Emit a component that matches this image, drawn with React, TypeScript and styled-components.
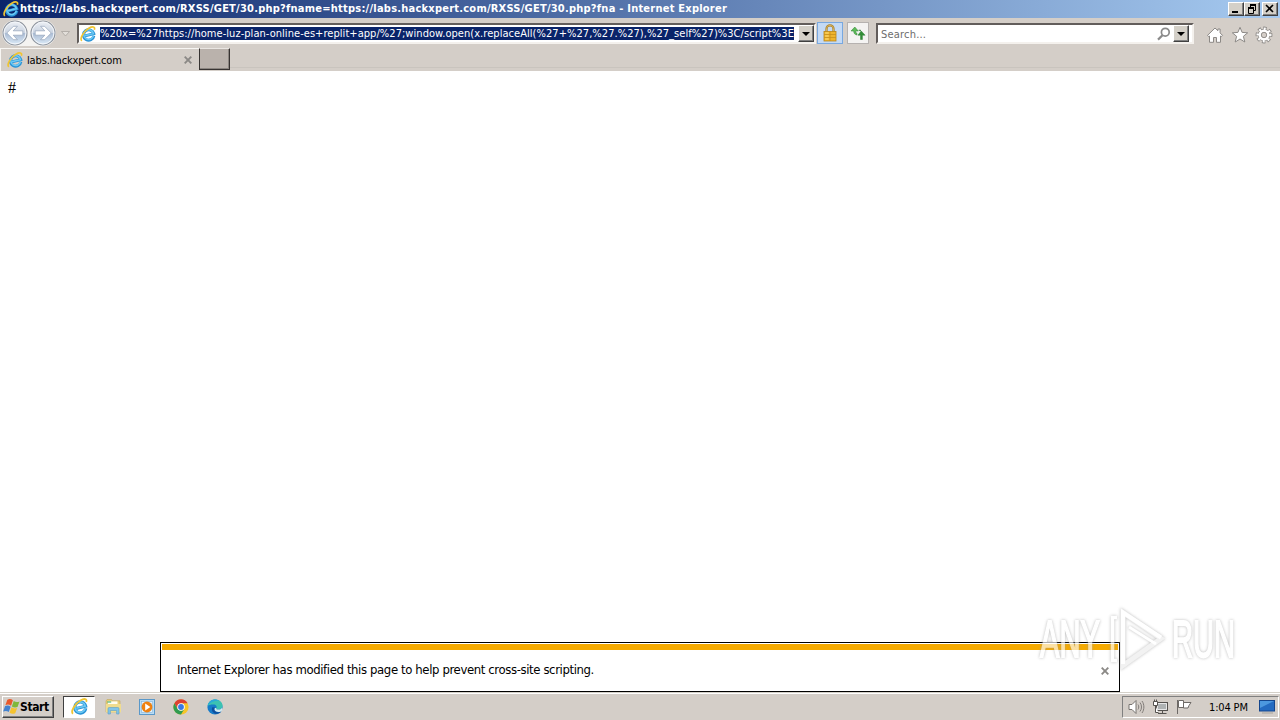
import React, { FC } from 'react';
import styled, { createGlobalStyle } from 'styled-components';

const ADDRESS = '%20x=%27https://home-luz-plan-online-es+replit+app/%27;window.open(x.replaceAll(%27+%27,%27.%27),%27_self%27)%3C/script%3E';
const TITLE = 'https://labs.hackxpert.com/RXSS/GET/30.php?fname=https://labs.hackxpert.com/RXSS/GET/30.php?fna - Internet Explorer';

interface IconProps {
  size?: number
}

const IconExplorer: FC<IconProps> = ({ size = 16 }) => (
  <svg width={size} height={size} viewBox="0 0 16 16" fill="none">
    <g transform="rotate(-14 8.5 8.5)">
      <path d="M13.4 11A5.2 5.2 0 1 1 13.8 9H4.8" stroke="#2a93d6" strokeWidth="3" />
      <path d="M13 10.800A4.900 4.900 0 1 1 13.500 8.800H4.800" stroke="#6bc9f4" strokeWidth="1.6" />
    </g>
    <path d="M1.800 14.800C-.6 12.600 3.600 5.400 8.800 2.300c3.700-2.200 6.700-1.700 5.500 1.400" stroke="#f0c431" strokeWidth="1.7" />
  </svg>
)

const IconArrow: FC<{ back?: boolean }> = ({ back }) => (
  <svg width="26" height="26" viewBox="0 0 26 26">
    <defs>
      <linearGradient id={back ? 'navBack' : 'navNext'} x1="0" y1="0" x2="0" y2="1">
        <stop offset="0" stopColor="#eef1f6" />
        <stop offset=".48" stopColor="#cbd4e1" />
        <stop offset=".5" stopColor="#aabbd3" />
        <stop offset="1" stopColor="#dcebf8" />
      </linearGradient>
    </defs>
    <circle cx="13" cy="13" r="12" fill={`url(#${back ? 'navBack' : 'navNext'})`} stroke="#8e949d" strokeWidth="1.1" />
    <circle cx="13" cy="13" r="10.900" fill="none" stroke="#f3f6fa" strokeWidth="1" />
    <path
      transform={back ? undefined : 'translate(26 0) scale(-1 1)'}
      d="M4.800 13l6.600-6.700h4L11.200 10.800h9.600v4.400h-9.600l4.200 4.500h-4z"
      fill="#fff"
      stroke="#92a2b9"
      strokeWidth=".7"
    />
  </svg>
)

const IconLock = () => (
  <svg width="14" height="18" viewBox="0 0 14 18">
    <path d="M3.5 8V4.8a3.5 3.5 0 0 1 7 0V8" fill="none" stroke="#a87f2a" strokeWidth="2.2" />
    <path d="M3.5 8V4.8a3.5 3.5 0 0 1 7 0V8" fill="none" stroke="#dfbf6a" strokeWidth=".8" />
    <rect x="1" y="7.5" width="12" height="9.5" fill="#eeb42d" stroke="#b98518" strokeWidth=".8" />
    <path d="M1 10.5h12M1 13.5h12M7 8v9" stroke="#c8901c" strokeWidth=".8" />
    <path d="M2.2 9h3.5M2.2 12h3.5M2.2 15h3.5" stroke="#ffe07a" />
  </svg>
)

const IconRefresh = () => (
  <svg width="16" height="15" viewBox="0 0 16 15" stroke="#2b8133" strokeWidth=".5" strokeLinejoin="round">
    <path d="M4.800 1L1 5h2.700c0 2.300 1 3.600 3.300 4V7.300c-1-.3-1.300-.9-1.300-2.300h2.600z" fill="#5dbb58" />
    <path d="M11.200 5l3.900 4.200h-2.700v4.300h-1.900V9.200H7.900z" fill="#328e38" />
    <path d="M8.800 4.200l2.200.2" fill="none" strokeWidth="1" />
  </svg>
)

const IconSearch = () => (
  <svg width="14" height="14" viewBox="0 0 14 14" fill="none" stroke="#8a8a8a">
    <circle cx="8.3" cy="5.2" r="3.9" strokeWidth="1.7" />
    <path d="M5.5 8.3L1 12.6" strokeWidth="2.2" />
  </svg>
)

const IconHome = () => (
  <svg width="18" height="18" viewBox="0 0 18 18" fill="#fff" stroke="#8c8986" strokeWidth="1" strokeLinejoin="round">
    <path d="M9 2L1.5 9.4l1.3 1.2.7-.6v6.3h4v-4.8h3v4.8h4V10l.7.6 1.3-1.2-2.4-2.5V3h-2.2v1.7z" />
  </svg>
)

const IconStar = () => (
  <svg width="18" height="18" viewBox="0 0 18 18" fill="#fff" stroke="#8c8986" strokeWidth="1" strokeLinejoin="round">
    <path d="M9 1.3l2.1 5.1 5.6.4-4.3 3.5 1.4 5.7L9 13l-4.8 3 1.4-5.7-4.3-3.5 5.6-.4z" />
  </svg>
)

const IconGear = () => (
  <svg width="18" height="18" viewBox="0 0 18 18">
    <circle cx="9" cy="9" r="6.4" fill="none" stroke="#8c8986" strokeWidth="4" strokeDasharray="3 2.027" transform="rotate(-13 9 9)" />
    <circle cx="9" cy="9" r="6.2" fill="#8c8986" />
    <circle cx="9" cy="9" r="6" fill="none" stroke="#fff" strokeWidth="3" strokeDasharray="1.8 2.912" transform="rotate(-8.5 9 9)" />
    <circle cx="9" cy="9" r="4.2" fill="#d4cec8" stroke="#fff" strokeWidth="2.6" />
    <circle cx="9" cy="9" r="2.7" fill="#d4cec8" stroke="#8c8986" strokeWidth=".9" />
  </svg>
)

const IconCross = () => (
  <svg width="8" height="8" viewBox="0 0 8 8" stroke="#8b8986" strokeWidth="1.9">
    <path d="M.7.7l6.6 6.6M7.3.7L.7 7.3" />
  </svg>
)

const IconFlag = () => (
  <svg width="19" height="17" viewBox="0 0 19 17">
    <g transform="rotate(8 9 8)">
      <path d="M3.5 2.4c2-1.3 3.8-1.2 5.6-.2L8 7.8c-1.8-1-3.6-1-5.6.2z" fill="#e8592b" />
      <path d="M10 2.7c1.9 1 3.7 1 5.8-.2l-1.2 5.8c-2 1.1-3.9 1.1-5.7.1z" fill="#7fb83b" />
      <path d="M2.2 9c2-1.2 3.8-1.2 5.6-.2l-1.2 5.7C4.9 13.4 3 13.5 1 14.7z" fill="#4382cf" />
      <path d="M8.7 9.3c1.9 1 3.7 1 5.7-.1l-1.2 5.6c-2 1.2-3.9 1.2-5.7.2z" fill="#f5c330" />
    </g>
  </svg>
)

const IconFolder = () => (
  <svg width="17" height="17" viewBox="0 0 17 17">
    <path d="M1 3l1-1.5h4.5l1 1.3H15V14H1z" fill="#e9ce78" stroke="#c5a95b" strokeWidth=".6" />
    <path d="M3 3.4h9.5V6H3z" fill="#fffdf0" />
    <path d="M2.2 3.4h4v1.2h-4z" fill="#54b67a" />
    <path d="M1 6h15v8.4H1z" fill="#f0dc8e" />
    <path d="M3 16v-5.3q0-1.2 1.2-1.2h8.6q1.2 0 1.2 1.2V16h-2.4v-3.5H5.4V16z" fill="#82c4e8" stroke="#5c9fc5" strokeWidth=".6" />
  </svg>
)

const IconPlayer = () => (
  <svg width="16" height="16" viewBox="0 0 16 16">
    <rect x=".5" y=".5" width="15" height="15" fill="#b9dcf4" stroke="#5a98c9" />
    <rect x="2.5" y="2.5" width="11" height="11" fill="#e2effa" stroke="#82b3d9" strokeWidth=".6" />
    <circle cx="8" cy="8" r="5.4" fill="#ee8110" />
    <path d="M6.2 4.6L11.4 8l-5.2 3.4z" fill="#fff" />
  </svg>
)

const IconChrome = () => (
  <svg width="16" height="16" viewBox="0 0 16 16">
    <circle cx="8" cy="8" r="7.6" fill="#f6c528" />
    <path d="M1.4 4.2A7.6 7.6 0 0 1 14.6 4.2H8L4.7 9.9z" fill="#dc4132" />
    <path d="M1.4 4.2L4.7 9.9 8 11.8 11.3 9.9 8 15.6A7.6 7.6 0 0 1 1.4 4.2z" fill="#309b50" />
    <circle cx="8" cy="8" r="3.8" fill="#fff" />
    <circle cx="8" cy="8" r="2.9" fill="#3979e3" />
  </svg>
)

const IconEdge = () => (
  <svg width="16" height="16" viewBox="0 0 16 16">
    <circle cx="8" cy="8" r="7.6" fill="#167bc9" />
    <path d="M.6 7C1.2 2.8 4.2.4 8 .4c4.4 0 7.6 3 7.6 6.2 0 2.6-2 4-4.2 4-1.8 0-2.6-.7-2-1.6.8-1.3-.2-3.5-3.2-3.5C3.6 5.5 1.5 6 .6 7z" fill="#3bc2b2" />
    <path d="M.6 7C1.1 3.3 4 .4 8 .4c2 0 3.5.6 4.6 1.5C8 1.5 3 3 .6 7z" fill="#2aa8da" />
    <path d="M5.3 8.2c-1.5 3.3 1 6.5 4.2 6.6 2 0 3.7-.8 4.8-2.2-4 1.5-6.8-.3-6.8-2.7 0-.8.5-1.5.5-1.5z" fill="#0d4f9e" />
    <path d="M9.4 9c-.6.9.2 1.6 2 1.6 1.5 0 2.9-.6 3.6-1.9l.4 2.5-1.5 1.3c-3 1.2-6.2.2-6.4-2.3 0-1 .7-1.5 1.9-1.2z" fill="#d4e9f0" />
  </svg>
)

const IconVolume = () => (
  <svg width="17" height="16" viewBox="0 0 17 16" fill="none" stroke="#77736f">
    <path d="M1 5.5h3L8 1.5v13l-4-4H1z" fill="#fff" />
    <path d="M10 5.5c1 1.5 1 3.5 0 5M12 3.5c2 2.7 2 6.3 0 9M14 2c2.5 3.6 2.5 8.4 0 12" strokeWidth=".9" />
  </svg>
)

const IconNetwork = () => (
  <svg width="17" height="16" viewBox="0 0 17 16" fill="none" stroke="#55524f">
    <rect x="4.5" y="3.5" width="11" height="8" fill="#aeb2b3" />
    <path d="M5.5 4.5h9v6h-9z" stroke="#f5f5f5" strokeWidth=".8" />
    <path d="M10.5 12v2M6 14.5h8.5" />
    <path d="M1.5 2.5h4v4h-4zM2.5.5v2M4.500.5v2M3.500 7v6.500h3" fill="#fff" />
  </svg>
)

const IconAction = () => (
  <svg width="17" height="16" viewBox="0 0 17 16" stroke="#6d6966" fill="#fff">
    <path d="M1.5 1v14M2.5 1.500h5v7h-5z" />
    <path d="M7.5 3.5h7.500l-2 3-1 2.500H7.500z" />
  </svg>
)

const IconDesktop = () => (
  <svg width="16" height="14" viewBox="0 0 16 14">
    <rect x=".5" y=".5" width="15" height="10.5" fill="#246bc1" stroke="#15468d" />
    <path d="M1 1h14L1 8z" fill="#4c98df" />
    <path d="M3 13h11" stroke="#a8a49d" />
  </svg>
)

const IconWatermark = () => (
  <svg width="56" height="62" viewBox="0 0 56 62" fill="none" stroke="#fff">
    <path d="M8 9.500H3.500v43H8" strokeWidth="3.500" />
    <path d="M14 4.500l38 26-38 27z" stroke="#ececec" strokeWidth="5" />
    <path d="M14 56V4.500l38 25" strokeWidth="4" />
    <path d="M20 19l27 17" strokeWidth="3" />
  </svg>
)

export const App: FC = () => {
  return (
    <>
      <GlobalStyle />
      <Screen>
        <TitleBar>
          <IconExplorer />
          <Title>{TITLE}</Title>
          <WindowButtons>
            <WindowButton>
              <svg width="12" height="10"><path d="M2 8h6" stroke="#000" strokeWidth="2" /></svg>
            </WindowButton>
            <WindowButton>
              <svg width="12" height="10" fill="none" stroke="#000">
                <path d="M4 1h6M4.5 1v2M9.5 1v5.5H8M2 4h6M2.5 4v5.5h5V4" />
                <path d="M4 1h6M2 4h6" strokeWidth="2" />
              </svg>
            </WindowButton>
            <WindowButton $gap>
              <svg width="12" height="10"><path d="M2 1l7 7M9 1L2 8" stroke="#000" strokeWidth="1.6" /></svg>
            </WindowButton>
          </WindowButtons>
        </TitleBar>
        <Toolbar>
          <NavButtons>
            <IconArrow back />
            <IconArrow />
          </NavButtons>
          <History>
            <svg width="9" height="6"><path d="M.5.5h8l-4 4.5z" fill="#e3dfda" stroke="#aaa59f" strokeWidth=".8" /></svg>
          </History>
          <Field $width={739}>
            <FieldIcon><IconExplorer /></FieldIcon>
            <Address>{ADDRESS}</Address>
            <DropButton><Caret /></DropButton>
          </Field>
          <LockButton><IconLock /></LockButton>
          <RefreshButton><IconRefresh /></RefreshButton>
          <Field $width={318}>
            <Placeholder>Search...</Placeholder>
            <IconSearch />
            <DropButton $inset><Caret /></DropButton>
          </Field>
          <Tools>
            <IconHome />
            <IconStar />
            <IconGear />
          </Tools>
        </Toolbar>
        <Tabs>
          <Tab>
            <IconExplorer />
            <TabTitle>labs.hackxpert.com</TabTitle>
            <IconCross />
          </Tab>
          <NewTab />
        </Tabs>
        <Page>
          <PageText>#</PageText>
          <Notice>
            <NoticeStripe />
            <NoticeBody>
              <NoticeText>Internet Explorer has modified this page to help prevent cross-site scripting.</NoticeText>
              <IconCross />
            </NoticeBody>
          </Notice>
        </Page>
        <Taskbar>
          <StartButton><IconFlag /><StartText>Start</StartText></StartButton>
          <TaskButton $active><IconExplorer size={17} /></TaskButton>
          <TaskButton><IconFolder /></TaskButton>
          <TaskButton><IconPlayer /></TaskButton>
          <TaskButton><IconChrome /></TaskButton>
          <TaskButton><IconEdge /></TaskButton>
          <Tray>
            <IconVolume />
            <IconNetwork />
            <IconAction />
            <Clock>1:04 PM</Clock>
            <IconDesktop />
          </Tray>
        </Taskbar>
        <Watermark>
          <WatermarkText>ANY</WatermarkText>
          <IconWatermark />
          <WatermarkText>RUN</WatermarkText>
        </Watermark>
      </Screen>
    </>
  )
}

export default App

const GlobalStyle = createGlobalStyle`
  * {
    box-sizing: border-box;
  }

  body {
    margin: 0;
    overflow: hidden;
  }

  svg {
    display: block;
    flex-shrink: 0;
  }
`
const Screen = styled.div`
  position: relative;
  width: 1280px;
  height: 720px;
  display: flex;
  flex-direction: column;
  overflow: hidden;
  background: #d4cec8;
  color: #000;
  font-family: "DejaVu Sans Condensed", "DejaVu Sans", sans-serif;
  font-stretch: condensed;
  font-size: 11px;
  white-space: nowrap;
`
const TitleBar = styled.div`
  height: 18px;
  display: flex;
  align-items: center;
  padding: 0 2px 0 3px;
  background: linear-gradient(90deg, #0a246a, #a6caf0);
`
const Title = styled.div`
  flex: 1;
  margin-left: 1px;
  color: #fff;
  font-weight: bold;
  line-height: 18px;
  letter-spacing: 0.23px;
`
const WindowButtons = styled.div`
  display: flex;
`
const WindowButton = styled.div<{ $gap?: boolean }>`
  width: 16px;
  height: 14px;
  margin-left: ${({ $gap }) => ($gap ? '2px' : '0')};
  padding: 1px;
  background: #d4d0c8;
  border: 1px solid;
  border-color: #fff #404040 #404040 #fff;
  box-shadow: inset -1px -1px #808080;
`
const Toolbar = styled.div`
  height: 30px;
  display: flex;
  align-items: flex-start;
  padding-top: 5px;
`
const NavButtons = styled.div`
  display: flex;
  gap: 2px;
  height: 26px;
  margin: -3px 0 0 2px;
  border-radius: 13px;
  background: #f4f3f1;
`
const History = styled.div`
  width: 21px;
  padding: 8px 0 0 5px;
`
const Field = styled.div<{ $width: number }>`
  width: ${({ $width }) => $width}px;
  height: 21px;
  display: flex;
  align-items: center;
  background: #fff;
  border: 2px solid;
  border-color: #625d5b #f4f1ed #f4f1ed #625d5b;
`
const FieldIcon = styled.div`
  width: 21px;
  padding-left: 1px;
`
const Address = styled.div`
  width: 695px;
  height: 13px;
  margin-right: 4px;
  overflow: hidden;
  background: #0a246a;
  color: #fff;
  line-height: 14px;
  letter-spacing: 0.05px;
`
const DropButton = styled.div<{ $inset?: boolean }>`
  width: 16px;
  height: 17px;
  flex-shrink: 0;
  margin-right: ${({ $inset }) => ($inset ? '3px' : '0')};
  margin-left: ${({ $inset }) => ($inset ? '2px' : '0')};
  display: grid;
  place-items: center;
  background: #d4d0c8;
  border: 1px solid;
  border-color: #fff #404040 #404040 #fff;
  box-shadow: inset -1px -1px #808080;
`
const Caret = styled.div`
  border: solid transparent;
  border-width: 4px 4px 0;
  border-top-color: #000;
`
const LockButton = styled.div`
  width: 26px;
  height: 22px;
  margin: -1px 4px 0 1px;
  display: grid;
  place-items: center;
  background: #c4daf5;
  border: 1px solid #78a8e0;
`
const RefreshButton = styled.div`
  width: 22px;
  height: 22px;
  margin: -1px 7px 0 0;
  display: grid;
  place-items: center;
  background: #f4f3f2;
  border: 1px solid #b6b2b0;
`
const Placeholder = styled.div`
  flex: 1;
  padding: 1px 0 0 3px;
  color: #6d6d6d;
  letter-spacing: 0.2px;
`
const Tools = styled.div`
  display: flex;
  gap: 6.5px;
  margin: 3px 0 0 12px;
`
const Tabs = styled.div`
  height: 23px;
  display: flex;
  background: linear-gradient(#d4cec8 19px, #c9c4be 19px, #c9c4be 20px, #d4cec8 20px);
`
const Tab = styled.div`
  width: 199px;
  display: flex;
  align-items: center;
  padding: 0 7px 0 6px;
  background: #d4cec8;
  border: solid #f8f6f3;
  border-width: 1px 0 0 1px;
`
const TabTitle = styled.div`
  flex: 1;
  padding-left: 4px;
  letter-spacing: -0.15px;
`
const NewTab = styled.div`
  width: 31px;
  height: 22px;
  background: #bab2ac;
  border: 1px solid #373331;
  border-top-color: #eae6e2;
  box-shadow: inset -1px -1px #8b8580;
`
const Page = styled.div`
  flex: 1;
  display: flex;
  flex-direction: column;
  align-items: center;
  justify-content: space-between;
  background: #fff;
`
const PageText = styled.div`
  align-self: flex-start;
  padding: 8px;
  font: 16px/18px "Liberation Serif", serif;
`
const Notice = styled.div`
  width: 960px;
  height: 50px;
  padding: 1px;
  background: #fff;
  border: 1px solid #000;
`
const NoticeStripe = styled.div`
  height: 6px;
  background: #f5aa00;
`
const NoticeBody = styled.div`
  height: 41px;
  display: flex;
  align-items: center;
  justify-content: space-between;
  padding: 0 9px 0 15px;
`
const NoticeText = styled.div`
  padding-bottom: 3px;
  font-size: 13px;
  letter-spacing: -0.385px;
`
const Taskbar = styled.div`
  height: 28px;
  display: flex;
  align-items: center;
  padding-left: 2px;
  border-top: 1px solid #d4d0c8;
  box-shadow: inset 0 1px #fff;
`
const StartButton = styled.div`
  width: 52px;
  height: 22px;
  display: flex;
  align-items: center;
  margin-right: 9px;
  border: 1px solid;
  border-color: #fff #404040 #404040 #fff;
  box-shadow: inset -1px -1px #808080;
`
const StartText = styled.div`
  margin-left: -2px;
  font-size: 12px;
  font-weight: bold;
  letter-spacing: -0.4px;
`
const TaskButton = styled.div<{ $active?: boolean }>`
  width: ${({ $active }) => ($active ? 32 : 30)}px;
  height: 22px;
  margin-right: ${({ $active }) => ($active ? 3 : 4)}px;
  display: grid;
  place-items: center;
  background: ${({ $active }) => ($active ? '#fff' : 'transparent')};
  border: 1px solid;
  border-color: ${({ $active }) => ($active ? '#404040 #fff #fff #404040' : 'transparent')};
`
const Tray = styled.div`
  width: 157px;
  height: 22px;
  display: flex;
  align-items: center;
  gap: 7px;
  margin-left: auto;
  margin-right: 1px;
  padding-left: 5px;
  border: 1px solid;
  border-color: #808080 #fff #fff #808080;
`
const Clock = styled.div`
  width: 43px;
  margin-left: 9px;
  padding-top: 1px;
  letter-spacing: -0.15px;
`
const Watermark = styled.div`
  position: absolute;
  left: 1040px;
  top: 608px;
  height: 62px;
  display: flex;
  align-items: center;
  gap: 7px;
  opacity: 0.65;
  filter: drop-shadow(0 0 1.5px #999);
  pointer-events: none;
`
const WatermarkText = styled.div`
  width: 62px;
  color: #fff;
  font: 52px/58px "Liberation Sans", sans-serif;
  -webkit-text-stroke: 2px #fff;
  transform: scaleX(0.56);
  transform-origin: left;
`
